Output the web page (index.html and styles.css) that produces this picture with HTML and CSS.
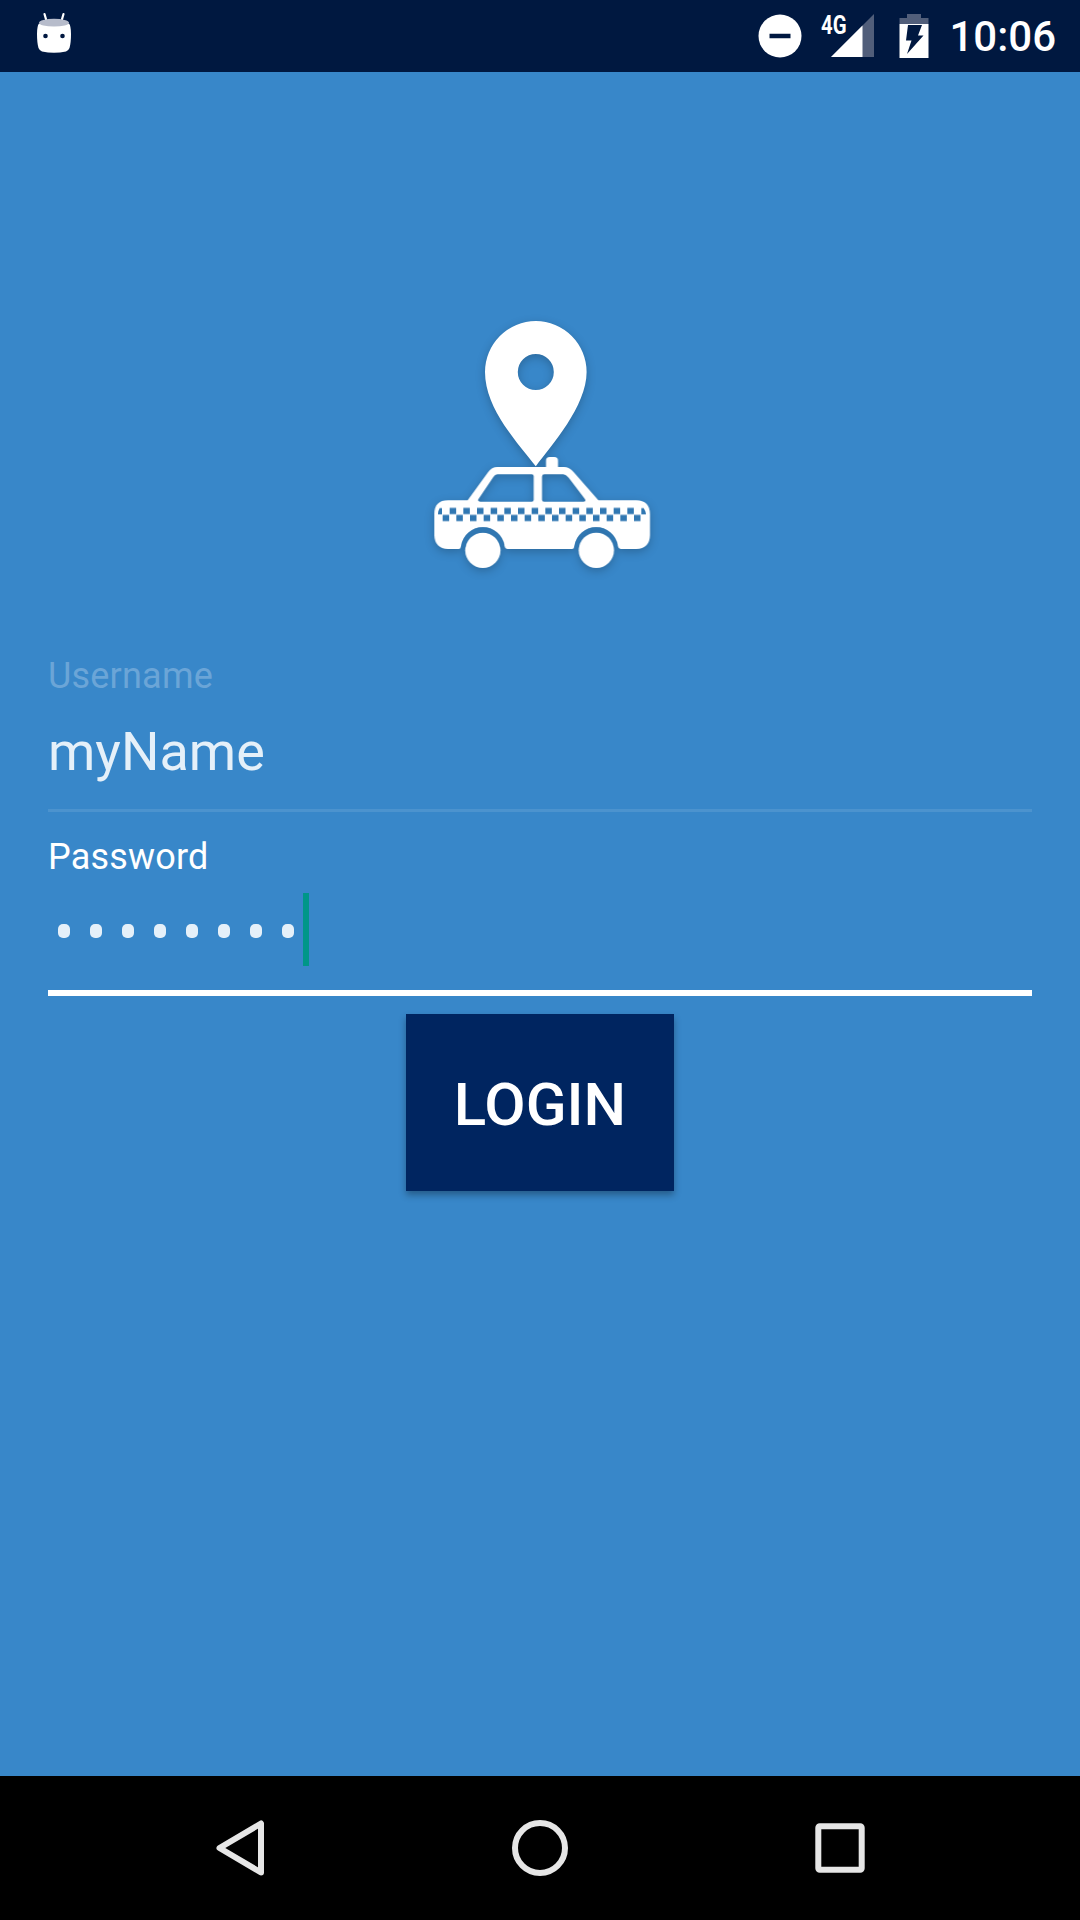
FILE: index.html
```html
<!DOCTYPE html>
<html lang="en">
<head>
<meta charset="utf-8">
<title>Login</title>
<link rel="stylesheet" href="styles.css">
</head>
<body>
<header class="status-bar">
  <svg class="status-debug" width="36" height="42" viewBox="36 12 36 42">
    <path d="M44.5 14 46.5 21M63.500 14 61.500 21" stroke="#fff" stroke-width="2.200" stroke-linecap="round"/>
    <path d="M39 23.500Q54 27 69 23.500Q71 26 71 34Q71 43 69.500 48Q68.500 50.500 66 51.500Q54 54 42 51.500Q39.500 50.500 38.500 48Q37 43 37 34Q37 26 39 23.500Z" fill="#fff"/>
    <ellipse cx="54" cy="22.700" rx="15" ry="3.900" fill="#b7bccb"/>
    <g fill="#001840"><circle cx="45.500" cy="36" r="2.300"/><circle cx="62.500" cy="36" r="2.300"/></g>
  </svg>
  <div class="status-icons">
    <svg width="44" height="44" viewBox="0 0 44 44"><circle cx="22" cy="22" r="21.500" fill="#fff"/><path d="M11.500 22H32.500" stroke="#001840" stroke-width="4.500"/></svg>
    <svg class="signal" width="60" height="54" viewBox="816 4 60 54">
      <path d="M874 14V57H831Z" fill="#515e7a"/>
      <path d="M862.500 25.500V57H831Z" fill="#fff"/>
      <text class="network" x="821" y="33.800" textLength="25.500" lengthAdjust="spacingAndGlyphs">4G</text>
    </svg>
    <svg class="battery" width="30" height="44" viewBox="0 0 30 44">
      <path d="M.500 10V4H8V0H22V4H29.500V10Z" fill="#515e7a"/>
      <path d="M.500 10H29.500V44H.500Z" fill="#fff"/>
      <path d="M9 11H23L19 21.500H24.500L8 40L12.500 26.500H7Z" fill="#001840"/>
    </svg>
    <span class="clock">10:06</span>
  </div>
</header>
<main class="login">
  <svg class="logo" width="240" height="280" viewBox="420 300 240 280">
    <g class="logo-shape">
      <path fill-rule="evenodd" d="M535.800 466.300C520 445 485 410 485 372A50.800 51 0 0 1 586.600 372C586.600 406 552 445 535.800 466.300ZM535.800 354A18 18 0 1 0 535.800 390A18 18 0 1 0 535.800 354Z"/>
      <g transform="translate(420 440) scale(.33333)">
        <path fill-rule="evenodd" d="M43 222Q43 181 84 181H143L204 97Q215 81 232 81H378V62Q378 51 389 51H403Q414 51 414 62V81H432Q448 81 460 95L535 181H649Q689 182 690 222V286Q689 326 649 327H602Q595 326 593 317A65.300 65.300 0 0 0 464 317Q462 327 456 327H261Q255 326 253 317A65.300 65.300 0 0 0 124 317Q122 327 116 327H84Q44 326 43 286ZM175 178Q172 184 180 185H335Q341 185 341 179V109Q341 103 335 103H232Q225 104 220 111ZM373 103Q366 103 366 110V179Q366 185 372 185H490Q500 184 494 176L446 113Q438 104 430 103Z"/>
        <circle cx="188.500" cy="331" r="53"/><circle cx="529" cy="331" r="53"/>
      </g>
    </g>
    <g transform="translate(420 440) scale(.33333)" fill="#3077b2">
      <path d="M124 317A65.300 65.300 0 0 1 253 317L241 322A53 53 0 0 0 136 322L122 324ZM464 317A65.300 65.300 0 0 1 593 317L582 322A53 53 0 0 0 476 322L462 324Z"/>
      <path d="M89 213H645M68 234H664" fill="none" stroke="#3077b2" stroke-width="19" stroke-dasharray="19.500 21.500"/>
      <path d="M54 223Q54 212 59 204H66V223ZM664 204H671Q677 212 678 223H664Z"/>
    </g>
  </svg>
  <form class="form">
    <div class="field">
      <label class="label">Username</label>
      <div class="value">myName</div>
    </div>
    <div class="field field-active">
      <label class="label">Password</label>
      <div class="secret">
        <i class="dot"></i><i class="dot"></i><i class="dot"></i><i class="dot"></i><i class="dot"></i><i class="dot"></i><i class="dot"></i><i class="dot"></i>
        <span class="caret"></span>
      </div>
    </div>
    <button class="submit" type="button">LOGIN</button>
  </form>
</main>
<nav class="nav-bar">
  <svg width="60" height="60" viewBox="0 0 60 60"><path d="M51 5.500V54.500L9.500 30Z"/></svg>
  <svg width="60" height="60" viewBox="0 0 60 60"><circle cx="30" cy="30" r="25"/></svg>
  <svg width="60" height="60" viewBox="0 0 60 60"><rect x="8.300" y="8.300" width="43.400" height="43.400" rx="1.500"/></svg>
</nav>
</body>
</html>
```
FILE: styles.css
```css
* { box-sizing: border-box; }
body {
  margin: 0;
  width: 1080px;
  height: 1920px;
  display: flex;
  flex-direction: column;
  background: #3887c9;
  color: #fff;
  font-family: Roboto, "Noto Sans", sans-serif;
}
svg { display: block; }
.status-bar {
  height: 72px;
  display: flex;
  justify-content: space-between;
  align-items: flex-start;
  padding: 12px 24px 0 36px;
  background: #001840;
}
.status-icons { display: flex; padding-top: 2px; }
.signal { margin: -10px 0 0 14px; }
.network { font: 700 25px Roboto, sans-serif; fill: #fff; }
.battery { margin-left: 23px; }
.clock {
  margin-left: 20px;
  font-size: 42px;
  font-weight: 500;
  line-height: 46px;
}
.login {
  flex: 1;
  display: flex;
  flex-direction: column;
  align-items: center;
  padding: 228px 48px 0;
}
.logo-shape {
  fill: #fff;
  filter: drop-shadow(0 3px 5px rgba(0, 0, 0, .22));
}
.form {
  width: 100%;
  margin-top: 75px;
  display: flex;
  flex-direction: column;
  align-items: center;
}
.field {
  width: 100%;
  height: 157px;
  border-bottom: 3px solid #4c93ce;
}
.field-active {
  height: 160px;
  margin-top: 24px;
  border-bottom: 6px solid #fff;
}
.label {
  display: block;
  font-size: 36px;
  line-height: 42px;
  letter-spacing: .2px;
  color: #6ba5d7;
}
.field-active .label { color: #fff; }
.value {
  margin-top: 23px;
  font-size: 54px;
  line-height: 64px;
  color: #e5f0f9;
}
.secret {
  height: 73px;
  margin-top: 15px;
  padding-left: 10px;
  display: flex;
  align-items: center;
}
.dot {
  width: 12px;
  height: 14px;
  margin: 3px 20px 0 0;
  border-radius: 5px;
  background: #e5f0f9;
}
.caret {
  width: 6px;
  height: 73px;
  margin-left: -11px;
  background: #009688;
}
.submit {
  width: 268px;
  height: 177px;
  margin-top: 18px;
  border: 0;
  padding: 4px 0 0;
  background: #002560;
  box-shadow: 0 4px 7px rgba(0, 0, 0, .32);
  color: #fff;
  font: 500 60px Roboto, sans-serif;
}
.nav-bar {
  height: 144px;
  display: flex;
  justify-content: center;
  align-items: center;
  gap: 240px;
  background: #000;
}
.nav-bar svg {
  fill: none;
  stroke: #e6e6e6;
  stroke-width: 6px;
  stroke-linejoin: round;
}
```
